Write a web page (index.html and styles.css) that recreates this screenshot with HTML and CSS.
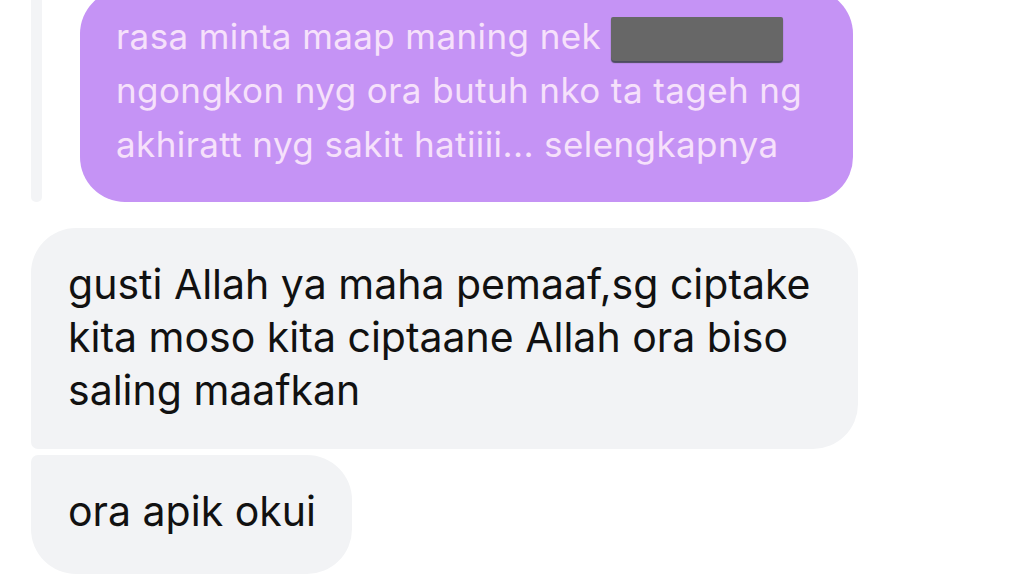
FILE: index.html
```html
<!DOCTYPE html>
<html lang="id">
<head>
<meta charset="utf-8">
<title>Chat</title>
<link rel="stylesheet" href="styles.css">
</head>
<body>
<div class="chat">
  <div class="reply-row">
    <div class="reply-bar"></div>
    <div class="bubble-quote">
      rasa minta maap maning nek <span class="redact"></span><br>
      ngongkon nyg ora butuh nko ta tageh ng<br>
      akhiratt nyg sakit hatiiii... selengkapnya
    </div>
  </div>
  <div class="msg-group">
    <div class="bubble bubble-first">
      gusti Allah ya maha pemaaf,sg ciptake<br>
      kita moso kita ciptaane Allah ora biso<br>
      saling maafkan
    </div>
    <div class="bubble bubble-last">ora apik okui</div>
  </div>
</div>
</body>
</html>
```

FILE: styles.css
```css
html, body {
  margin: 0;
  padding: 0;
  background: #ffffff;
  overflow: hidden;
}

.chat {
  width: 1023px;
  height: 588px;
  padding-left: 31px;
  box-sizing: border-box;
  font-family: Inter, "Noto Sans", "Liberation Sans", sans-serif;
}

.reply-row {
  display: flex;
  align-items: stretch;
  gap: 38px;
  margin-top: -11px;
}

.reply-bar {
  width: 11px;
  background: #f3f4f6;
  border-radius: 0 0 5px 5px;
}

.bubble-quote {
  width: 773px;
  box-sizing: border-box;
  height: 213px;
  padding: 20px 20px 0 36px;
  background: #c593f5;
  color: #f6e1fb;
  font-size: 35px;
  letter-spacing: 0.4px;
  line-height: 54px;
  border-radius: 45px;
  white-space: nowrap;
}

.redact {
  display: inline-block;
  width: 172px;
  height: 44px;
  vertical-align: -12px;
  background: #676767;
  border-radius: 2px 2px 4px 4px;
  box-shadow: 0 2px 1px #4c4c5e;
}

.msg-group {
  display: flex;
  flex-direction: column;
  align-items: flex-start;
  gap: 6px;
  margin-top: 26px;
}

.bubble {
  box-sizing: border-box;
  background: #f2f3f5;
  color: #111111;
  font-size: 41px;
  line-height: 53px;
  white-space: nowrap;
  padding-left: 37px;
}

.bubble-first {
  width: 827px;
  height: 221px;
  padding-top: 30px;
  border-radius: 45px 45px 45px 7px;
}

.bubble-last {
  width: 321px;
  height: 119px;
  padding-top: 30px;
  border-radius: 7px 45px 45px 45px;
}
```
